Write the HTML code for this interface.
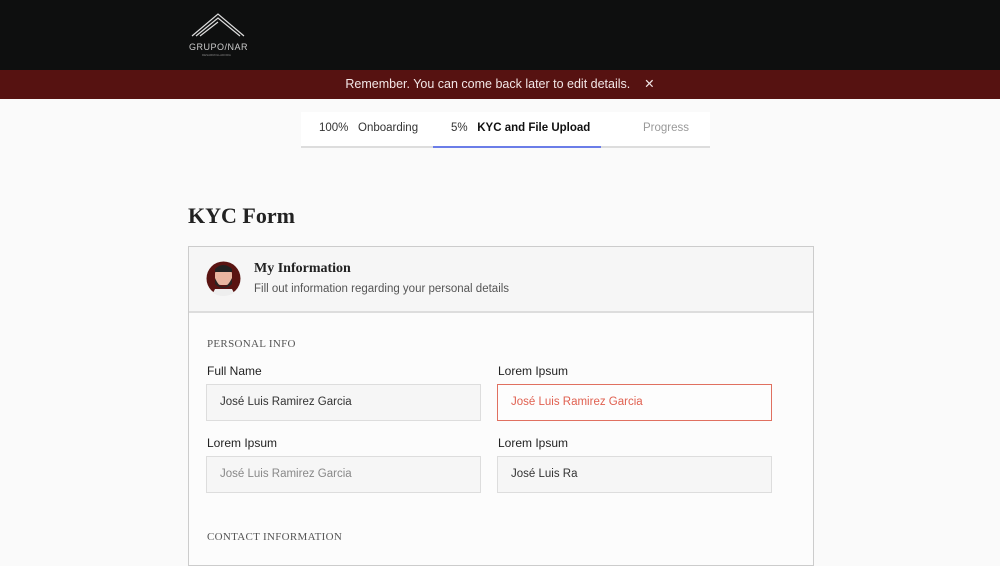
<!DOCTYPE html>
<html><head><style>
*{margin:0;padding:0;box-sizing:border-box}
body{width:1000px;height:557px;overflow:hidden;background:#fafafa;font-family:"Liberation Sans",sans-serif;color:#222;position:relative}
.top{position:absolute;left:0;top:0;width:1000px;height:70px;background:#0e0f0f}
.ban{position:absolute;left:0;top:70px;width:1000px;height:29px;background:#561211;color:#f2e6e6;font-size:12.5px;text-align:center;line-height:29px}
.tabs{position:absolute;left:301px;top:112px;width:409px;height:36px;background:#fff;border-bottom:2px solid #ddd;font-size:11.5px}
.tabs span{position:absolute;top:10px}
.ul{position:absolute;left:132px;bottom:-2px;width:168px;height:2px;background:#6b7de8}
h1{position:absolute;left:188px;top:203px;font-family:"Liberation Serif",serif;font-size:22px;font-weight:bold;color:#222}
.card{position:absolute;left:188px;top:246px;width:626px;height:320px;border:1px solid #ccc;background:#fcfcfc}
.hd{height:66px;background:#f6f6f6;border-bottom:2px solid #ddd;position:relative}
.t1{position:absolute;left:65px;top:14px;font-family:"Liberation Serif",serif;font-weight:bold;font-size:14px;color:#222}
.t2{position:absolute;left:65px;top:36px;font-size:11.5px;color:#555}
.sec{position:absolute;left:18px;font-family:"Liberation Serif",serif;font-size:11px;color:#555;letter-spacing:.3px}
.lab{position:absolute;font-size:12px;color:#222}
.in{position:absolute;width:275px;height:37px;border:1px solid #ddd;background:#f6f6f6;font-size:11.5px;padding-left:13px;line-height:35px;color:#333}
</style></head><body>
<div class="top">
<svg style="position:absolute;left:188px;top:12px" width="64" height="46" viewBox="0 0 64 46">
<path d="M4 24 L30 2 L56 24 M8 24 L30 6 L52 24 M12 24 L30 10" stroke="#ddd" stroke-width="1.2" fill="none"/>
<text x="1" y="38" fill="#ccc" font-size="9" font-family="Liberation Sans" letter-spacing=".5">GRUPO/NAR</text>
<text x="14" y="44" fill="#888" font-size="3">DESARROLLADORA</text>
</svg></div>
<div class="ban">Remember. You can come back later to edit details. &nbsp;&nbsp;&nbsp;✕</div>
<div class="tabs">
<span style="left:18px;color:#333">100% &nbsp; Onboarding</span>
<span style="left:150px;color:#333">5% &nbsp; <b style="color:#111">KYC and File Upload</b></span>
<span style="left:342px;color:#999">Progress</span>
<div class="ul"></div></div>
<h1>KYC Form</h1>
<div class="card">
<div class="hd">
<svg style="position:absolute;left:16px;top:13px" width="37" height="37" viewBox="0 0 37 37">
<circle cx="18.5" cy="18.5" r="17" fill="#5a1412"/>
<rect x="10" y="8" width="17" height="17" rx="6" fill="#e9b5a0"/>
<path d="M10 9 Q18 1 27 9 L27 12 L10 12Z" fill="#222"/>
<path d="M10 18 Q18 36 27 18 L27 24 Q18 32 10 24Z" fill="#2b2422"/>
<path d="M8 33 Q18 39 29 33 L27 29 L10 29Z" fill="#eee"/>
</svg>
<div class="t1">My Information</div>
<div class="t2">Fill out information regarding your personal details</div>
</div>
<div class="sec" style="top:91px">PERSONAL INFO</div>
<div class="lab" style="left:18px;top:117px">Full Name</div>
<div class="lab" style="left:309px;top:117px">Lorem Ipsum</div>
<div class="in" style="left:17px;top:137px">José Luis Ramirez Garcia</div>
<div class="in" style="left:308px;top:137px;border-color:#e07060;background:#fdfdfd;color:#e06050">José Luis Ramirez Garcia</div>
<div class="lab" style="left:18px;top:189px">Lorem Ipsum</div>
<div class="lab" style="left:309px;top:189px">Lorem Ipsum</div>
<div class="in" style="left:17px;top:209px;color:#888">José Luis Ramirez Garcia</div>
<div class="in" style="left:308px;top:209px">José Luis Ra</div>
<div class="sec" style="top:284px">CONTACT INFORMATION</div>
</div>
</body></html>
